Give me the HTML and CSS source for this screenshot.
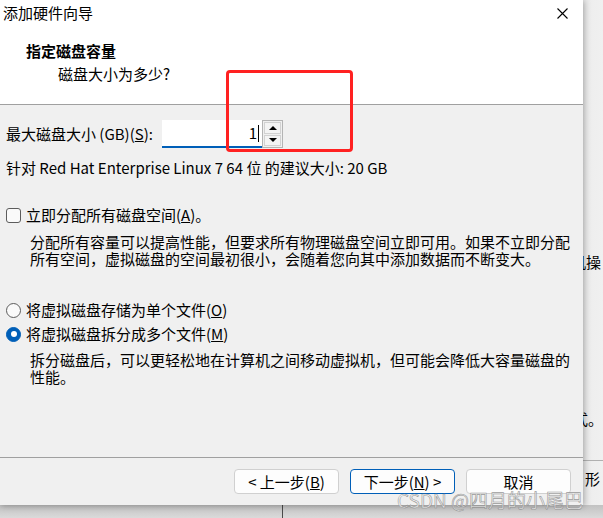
FILE: index.html
```html
<!DOCTYPE html>
<html lang="zh-CN">
<head>
<meta charset="utf-8">
<title>添加硬件向导</title>
<link rel="stylesheet" href="styles.css">
</head>
<body>
<div class="screen">
  <div class="bg-window">
    <span class="bg-text bg-t1">机操</span>
    <span class="bg-text bg-t2">式。</span>
    <span class="bg-rule"></span>
    <span class="bg-text bg-t3">形</span>
  </div>
  <div class="bg-bottom"><span class="bg-vline"></span></div>

  <div class="dialog">
    <div class="header">
      <div class="titlebar">
        <span class="title">添加硬件向导</span>
        <svg class="close" width="11" height="11" viewBox="0 0 11 11"><path d="M0.5 0.5 L10.5 10.5 M10.5 0.5 L0.5 10.5" stroke="#000" stroke-width="1.1" fill="none"/></svg>
      </div>
      <div class="heading">指定磁盘容量</div>
      <div class="subheading">磁盘大小为多少?</div>
    </div>

    <div class="content">
      <div class="size-row">
        <span class="size-label">最大磁盘大小 (GB)(<u>S</u>):</span>
        <div class="input">1<span class="caret"></span></div>
        <div class="spinner">
          <span class="spin-btn"><span class="arrow-up"></span></span>
          <span class="spin-btn"><span class="arrow-down"></span></span>
        </div>
      </div>
      <div class="recommend">针对 Red Hat Enterprise Linux 7 64 位 的建议大小: 20 GB</div>

      <div class="option check-row"><span class="checkbox"></span>立即分配所有磁盘空间(<u>A</u>)。</div>
      <p class="desc">分配所有容量可以提高性能，但要求所有物理磁盘空间立即可用。如果不立即分配所有空间，虚拟磁盘的空间最初很小，会随着您向其中添加数据而不断变大。</p>

      <div class="option radio-row first"><span class="radio"></span>将虚拟磁盘存储为单个文件(<u>O</u>)</div>
      <div class="option radio-row second"><span class="radio on"></span>将虚拟磁盘拆分成多个文件(<u>M</u>)</div>
      <p class="desc desc-split">拆分磁盘后，可以更轻松地在计算机之间移动虚拟机，但可能会降低大容量磁盘的性能。</p>
    </div>

    <div class="footer">
      <button class="btn">&lt; 上一步(<u>B</u>)</button>
      <button class="btn primary">下一步(<u>N</u>) &gt;</button>
      <button class="btn">取消</button>
    </div>
  </div>

  <div class="annotation"></div>
  <div class="watermark">CSDN @四月的小尾巴</div>
</div>
</body>
</html>
```
FILE: styles.css
```css
html, body {
  margin: 0;
  padding: 0;
}

body {
  font-family: "Noto Sans CJK SC", "Noto Sans", sans-serif;
  font-size: 15px;
  color: #000;
  background: #efefef;
}

.screen {
  position: relative;
  width: 603px;
  height: 518px;
  overflow: hidden;
  background: linear-gradient(to right, #e4e4e4 583px, #eeeeee 592px, #f0f0f0 603px);
}

/* background window peeking out on the right and bottom */
.bg-window {
  position: absolute;
  left: 0;
  top: 0;
  width: 603px;
  height: 518px;
}

.bg-text {
  position: absolute;
  font-size: 15px;
  line-height: 18px;
  white-space: nowrap;
}

.bg-t1 { left: 571px; top: 253px; }
.bg-t2 { left: 573px; top: 410px; }
.bg-t3 { left: 585px; top: 470px; }

.bg-rule {
  position: absolute;
  left: 583px;
  top: 460px;
  width: 20px;
  height: 1px;
  background: #b0b0b0;
}

.bg-bottom {
  position: absolute;
  left: 0;
  top: 505px;
  width: 603px;
  height: 13px;
  background: linear-gradient(to bottom, #c2c2c2, #dadada);
}

.bg-vline {
  position: absolute;
  left: 282px;
  top: 0;
  width: 1px;
  height: 13px;
  background: #4a4a4a;
}

/* dialog */
.dialog {
  position: relative;
  z-index: 1;
  width: 583px;
  height: 505px;
  background: #f0f0f0;
  display: flex;
  flex-direction: column;
  box-shadow: 1px 1px 6px rgba(0, 0, 0, 0.28);
}

.header {
  height: 105px;
  box-sizing: border-box;
  background: #fff;
  border-bottom: 1px solid #a0a0a0;
}

.titlebar {
  height: 26px;
  display: flex;
  align-items: center;
  justify-content: space-between;
  padding: 0 15px 0 3px;
}

.title {
  line-height: 26px;
}

.heading {
  margin-top: 15px;
  padding-left: 26px;
  font-weight: bold;
  line-height: 20px;
}

.subheading {
  margin-top: 3px;
  padding-left: 58px;
  line-height: 20px;
}

.content {
  flex: 1;
  padding: 15px 0 0 6px;
}

.size-row {
  display: flex;
  align-items: center;
  height: 28px;
}

.size-label {
  width: 156px;
  line-height: 20px;
  white-space: nowrap;
}

.input {
  width: 100px;
  height: 28px;
  box-sizing: border-box;
  background: #fff;
  border-bottom: 2px solid #005fb8;
  display: flex;
  align-items: center;
  justify-content: flex-end;
  padding-right: 3px;
  line-height: 20px;
}

.caret {
  display: inline-block;
  width: 1px;
  height: 17px;
  background: #000;
  margin-left: 1px;
}

.spinner {
  width: 21px;
  height: 28px;
  box-sizing: border-box;
  border: 1px solid #b4b4b4;
  background: #f0f0f0;
  display: flex;
  flex-direction: column;
  padding: 1px;
  gap: 1px;
}

.spin-btn {
  flex: 1;
  border: 1px solid #d2d2d2;
  background: #f4f4f4;
  display: flex;
  align-items: center;
  justify-content: center;
}

.arrow-up {
  width: 0;
  height: 0;
  border-left: 4px solid transparent;
  border-right: 4px solid transparent;
  border-bottom: 4px solid #000;
}

.arrow-down {
  width: 0;
  height: 0;
  border-left: 4px solid transparent;
  border-right: 4px solid transparent;
  border-top: 4px solid #000;
}

.recommend {
  margin-top: 10px;
  line-height: 20px;
  white-space: nowrap;
}

.option {
  display: flex;
  align-items: center;
  line-height: 20px;
  height: 20px;
  white-space: nowrap;
}

.check-row {
  margin-top: 27px;
}

.checkbox {
  width: 15px;
  height: 15px;
  box-sizing: border-box;
  border: 1px solid #5c5c5c;
  border-radius: 3px;
  background: #fafafa;
  margin-right: 5px;
}

.radio {
  width: 15px;
  height: 15px;
  box-sizing: border-box;
  border: 1px solid #5c5c5c;
  border-radius: 50%;
  background: #fafafa;
  margin-right: 5px;
  display: flex;
  align-items: center;
  justify-content: center;
}

.radio.on {
  background: #005fb8;
  border-color: #005fb8;
}

.radio.on::after {
  content: "";
  width: 6px;
  height: 6px;
  border-radius: 50%;
  background: #fff;
}

.radio-row.first {
  margin-top: 33px;
}

.radio-row.second {
  margin-top: 4px;
}

.desc {
  margin: 8px 0 0 24px;
  width: 548px;
  line-height: 17px;
}

.desc-split {
  margin-top: 7px;
}

.footer {
  height: 48px;
  box-sizing: border-box;
  border-top: 1px solid #a0a0a0;
  padding: 11px 12px 0 0;
  display: flex;
  justify-content: flex-end;
  align-items: flex-start;
  gap: 11px;
}

.btn {
  width: 105px;
  height: 25px;
  box-sizing: border-box;
  border: 1px solid #d0d0d0;
  border-radius: 4px;
  background: #fdfdfd;
  font-family: inherit;
  font-size: 15px;
  line-height: 18px;
  color: #000;
  padding: 0;
}

.btn.primary {
  border-color: #005fb8;
}

/* overlays */
.annotation {
  position: absolute;
  z-index: 3;
  left: 226px;
  top: 70px;
  width: 127px;
  height: 82px;
  box-sizing: border-box;
  border: 3px solid #ff2121;
  border-radius: 4px;
}

.watermark {
  position: absolute;
  z-index: 4;
  left: 397px;
  top: 492px;
  font-size: 19px;
  line-height: 16px;
  white-space: nowrap;
  color: rgba(240, 240, 240, 0.75);
  -webkit-text-stroke: 0.6px rgba(130, 130, 130, 0.8);
}
```
